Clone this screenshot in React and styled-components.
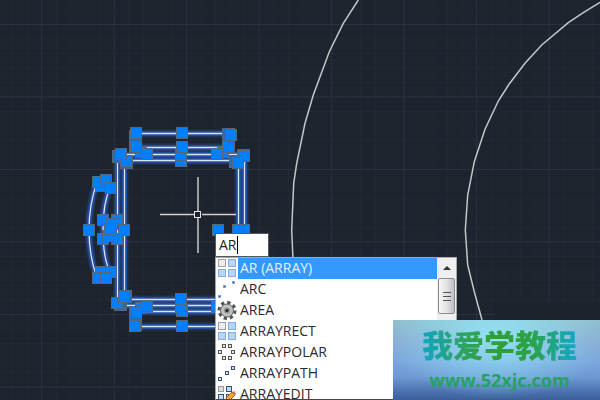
import React from "react";
import styled, { createGlobalStyle } from "styled-components";

const GlobalStyle = createGlobalStyle`
  * { box-sizing: border-box; }
  body { margin: 0; background: #1d242d; }
`;

const Workspace = styled.main`
  position: relative;
  min-height: 100vh;
  overflow: hidden;
  background: #1d242d;
  font-family: "Open Sans", "Noto Sans", sans-serif;
`;

const Drawing = styled.svg`
  position: absolute;
  inset: 0;
  width: 100%;
  height: 100%;
`;

const CommandPrompt = styled.form`
  position: absolute;
  left: 215px;
  top: 233px;
  bottom: 0;
  width: 242px;
  display: flex;
  flex-direction: column;
`;

const CommandField = styled.label`
  display: flex;
  align-items: center;
  flex: none;
  width: 54px;
  height: 24px;
  padding-left: 3px;
  background: #fff;
  border: 1px solid #55585c;
`;

const CommandInput = styled.input`
  width: 18px;
  padding: 0;
  border: 0;
  outline: 0;
  background: transparent;
  color: #222;
  font: 14px/20px "Open Sans", sans-serif;
`;

const Caret = styled.span`
  width: 1px;
  height: 18px;
  background: #000;
`;

const Suggestions = styled.div`
  display: flex;
  flex: 1;
  min-height: 0;
  border: 1px solid #a5a7aa;
  border-bottom-color: #45474b;
  background: #fff;
`;

const OptionList = styled.div`
  flex: 1;
  min-width: 0;
  overflow: hidden;
`;

const Option = styled.button`
  display: flex;
  width: 100%;
  height: 21px;
  padding: 0;
  border: 0;
  background: #fff;
  color: #2b2b2b;
  font: 14px/20px "Open Sans", sans-serif;
  text-align: left;
`;

const OptionIcon = styled.svg`
  flex: none;
  width: 22px;
  height: 21px;
`;

const OptionText = styled.span`
  flex: 1;
  height: 21px;
  padding-left: 2px;
  background: ${(p) => (p.$selected ? "#3399ff" : "transparent")};
  color: ${(p) => (p.$selected ? "#e4f1ff" : "inherit")};
`;

const ScrollBar = styled.div`
  display: flex;
  flex-direction: column;
  align-items: center;
  width: 19px;
  background: #f0eff0;
`;

const ScrollUp = styled.button`
  display: grid;
  place-items: center;
  width: 100%;
  height: 20px;
  padding: 0;
  border: 0;
  background: transparent;
`;

const ScrollThumb = styled.div`
  display: grid;
  place-items: center;
  width: 17px;
  height: 36px;
  border: 1px solid #8e8e90;
  border-radius: 2px;
  background: linear-gradient(90deg, #f6f6f6, #e2e2e3 50%, #bfbfc2);
`;

const Watermark = styled.aside`
  position: absolute;
  right: 0;
  bottom: 0;
  width: 207px;
  height: 80px;
  display: flex;
  flex-direction: column;
  align-items: center;
  padding: 4px 0 0 6px;
  background:
    radial-gradient(ellipse 110px 62px at 50% 22%, rgba(148, 234, 250, 0.85), rgba(140, 215, 245, 0) 100%),
    linear-gradient(180deg, #8fc0ce 0%, #8bacd2 25%, #7ba6dc 52%, #6c98d2 72%, #4a70ad 90%, #3c5f98 100%);
`;

const SiteName = styled.strong`
  font: 900 31px/40px "Noto Sans CJK SC", sans-serif;
  background: linear-gradient(90deg, #12a5c2, #2da35b 28%, #2f9f37 52%, #2ba34c 72%, #10a9cb);
  background-clip: text;
  color: transparent;
`;

const SiteLink = styled.a`
  color: #25a163;
  font: 700 18px/32px "Open Sans", sans-serif;
  text-decoration: none;
`;

const steps = (first, step, count) => Array.from({ length: count }, (_, i) => first + i * step);
const minorX = steps(-1.8, 14.5, 134);
const minorY = steps(10, 14.5, 75);
const majorX = steps(41.7, 72.5, 27);
const majorY = steps(24.5, 72.5, 15);

const selectedPaths = [
  "M136 133.5H231",
  "M136 147.5H228",
  "M121 154.5H244",
  "M125 160.5H238",
  "M124 299.5H240",
  "M118 305.5H240",
  "M136 311.5H240",
  "M136 326.5H240",
  "M117.5 154V303",
  "M124.5 160V298",
  "M238.5 160V240",
  "M244.5 156V240",
  "M97 182Q89 205 89 230Q89 256 97 278",
  "M110 188Q103 203 103 230Q103 258 110 272",
];

const backGrips = [
  { x: 129.5, y: 130.5, w: 12, h: 22 },
  { x: 112.5, y: 150.5, w: 12, h: 12 },
  { x: 120.5, y: 156.5, w: 12, h: 12 },
  { x: 222.5, y: 128.5, w: 12, h: 25 },
  { x: 237.5, y: 149.5, w: 12, h: 12 },
  { x: 229.5, y: 155.5, w: 12, h: 12 },
  { x: 114.5, y: 298.5, w: 12, h: 12 },
  { x: 118.5, y: 290.5, w: 13, h: 12 },
  { x: 129.5, y: 306.5, w: 12, h: 24 },
];

const grips = [
  [141, 152], [136, 133], [136, 147], [147, 154], [126, 161], [121, 154],
  [181, 161], [181, 155], [182, 147], [182, 133],
  [223, 152], [231, 135], [228, 147], [217, 154], [244, 156], [238, 163],
  [101, 186], [98, 182], [106, 180], [111, 188],
  [103, 220], [117, 220], [112, 224], [103, 239], [117, 239], [108, 236], [110, 229], [124, 230], [89, 230],
  [101, 272], [111, 272], [98, 278], [106, 278],
  [117, 303], [124, 297], [141, 308], [147, 306], [136, 312], [135, 326],
  [182, 311], [181, 306], [181, 299], [182, 326], [217, 306],
  [218, 230], [244, 230], [238, 230],
];

function Grip({ x, y, w = 11, h = 11, fill }) {
  return <rect x={x} y={y} width={w} height={h} fill={fill} stroke="#53687e" />;
}

function DrawingArea() {
  return (
    <Drawing viewBox="0 0 600 400" preserveAspectRatio="xMinYMin slice" aria-hidden="true">
      <g stroke="#222934">
        {minorX.map((x) => <path key={x} d={`M${x} 0V1000`} />)}
        {minorY.map((y) => <path key={y} d={`M0 ${y}H1900`} />)}
      </g>
      <g stroke="#2b3143">
        {majorX.map((x) => <path key={x} d={`M${x} 0V1000`} />)}
        {majorY.map((y) => <path key={y} d={`M0 ${y}H1900`} />)}
      </g>
      <rect x="494" y="303" width="106" height="17" fill="#1c232c" />
      <g fill="none" stroke="#c4c6c8" strokeWidth="1.5">
        <path d="M358.3 0L343.3 23.3L329.3 51.7L313.3 95L305 123.3L296.7 163.3L293.7 183.3L291.7 230L293 260" />
        <path d="M600 2.3L583.3 12.7L568.3 22.7L541.7 45L525 63.3L509 84.3L498.3 101L485 129.3L474.3 161.7L467.7 195L465.3 230L467.7 265L474.3 291.7L482 320" />
      </g>
      <g fill="none">
        {selectedPaths.map((d) => <path key={d} d={d} stroke="#2456b4" strokeOpacity="0.35" strokeWidth="8" />)}
        {selectedPaths.map((d) => <path key={d} d={d} stroke="#2858b8" strokeOpacity="0.65" strokeWidth="5" />)}
        {selectedPaths.map((d) => <path key={d} d={d} stroke="#dce5f5" strokeWidth="1.3" />)}
      </g>
      {backGrips.map((g) => <Grip key={`${g.x}-${g.y}`} {...g} fill="#286bb5" />)}
      {grips.map(([x, y]) => <Grip key={`${x}-${y}`} x={x - 5.5} y={y - 5.5} fill="#0080ff" />)}
      <path d="M160 214.5H194M202 214.5H236" stroke="#d0d0d0" strokeWidth="1.3" />
      <path d="M198 177V211M198 218V253" stroke="#9c9fa2" strokeWidth="2" />
      <rect x="194.5" y="211.5" width="6" height="6" fill="#1d242d" stroke="#e4e4e4" />
    </Drawing>
  );
}

function Tiles({ cells, size, fill, stroke }) {
  return cells.map(([x, y]) => (
    <rect key={`${x}-${y}`} x={x} y={y} width={size} height={size} fill={fill} stroke={stroke} />
  ));
}

const blueTiles = { size: 7, fill: "#b9d4fb", stroke: "#83aceb" };

const icons = {
  grid: (
    <>
      <Tiles cells={[[2.5, 1.5]]} size={7} fill="#ececec" stroke="#a2a2a2" />
      <Tiles cells={[[12.5, 1.5], [2.5, 11.5], [12.5, 11.5]]} {...blueTiles} />
    </>
  ),
  arc: <Tiles cells={[[2.5, 16.5], [7.5, 6.5], [16.5, 2.5]]} size={2} fill="#2d54a8" stroke="#7fa3e2" />,
  gear: (
    <>
      <circle cx="11" cy="10.5" r="8" fill="none" stroke="#505254" strokeWidth="3" strokeDasharray="3.3 2.98" />
      <circle cx="11" cy="10.5" r="6.5" fill="#bfc1c3" stroke="#5b5d5f" />
      <circle cx="11" cy="10.5" r="3" fill="#8d8f91" />
      <circle cx="11" cy="10.5" r="1.5" fill="#222" />
    </>
  ),
  polar: (
    <Tiles
      cells={[[6.5, 2.5], [12.5, 2.5], [2.5, 8.5], [15.5, 8.5], [6.5, 14.5], [12.5, 14.5]]}
      size={3}
      fill="#e7e7e7"
      stroke="#555"
    />
  ),
  path: <Tiles cells={[[2.5, 14.5], [9.5, 8.5], [15.5, 3.5]]} size={3} fill="#dce7f9" stroke="#34517f" />,
  edit: (
    <>
      <Tiles cells={[[2.5, 2.5]]} size={5} fill="#ddd" stroke="#999" />
      <Tiles cells={[[10.5, 2.5], [2.5, 10.5], [10.5, 10.5]]} size={5} fill="#c5d8f4" stroke="#31537f" />
      <path d="M10 14L16 8L19 11L13 17Z" fill="#f1a72b" stroke="#a7641a" />
      <path d="M16 8L18 7L20 10L19 11Z" fill="#c87862" />
      <path d="M10 14L13 17L9 18Z" fill="#333" />
    </>
  ),
};

const commands = [
  { name: "AR (ARRAY)", icon: "grid", selected: true },
  { name: "ARC", icon: "arc" },
  { name: "AREA", icon: "gear" },
  { name: "ARRAYRECT", icon: "grid" },
  { name: "ARRAYPOLAR", icon: "polar" },
  { name: "ARRAYPATH", icon: "path" },
  { name: "ARRAYEDIT", icon: "edit" },
];

export default function App() {
  return (
    <Workspace>
      <GlobalStyle />
      <DrawingArea />
      <CommandPrompt>
        <CommandField>
          <CommandInput aria-label="Command" defaultValue="AR" />
          <Caret />
        </CommandField>
        <Suggestions>
          <OptionList role="listbox" aria-label="Commands">
            {commands.map(({ name, icon, selected }) => (
              <Option key={name} type="button" role="option" aria-selected={!!selected}>
                <OptionIcon viewBox="0 0 22 21" aria-hidden="true">{icons[icon]}</OptionIcon>
                <OptionText $selected={selected}>{name}</OptionText>
              </Option>
            ))}
          </OptionList>
          <ScrollBar>
            <ScrollUp type="button" aria-label="Scroll up">
              <svg width="8" height="4" aria-hidden="true"><path d="M0 4L4 0L8 4Z" fill="#333" /></svg>
            </ScrollUp>
            <ScrollThumb>
              <svg width="8" height="10" aria-hidden="true">
                <path d="M0 1.5H8M0 5.5H8M0 9.5H8" stroke="#555" />
              </svg>
            </ScrollThumb>
          </ScrollBar>
        </Suggestions>
      </CommandPrompt>
      <Watermark>
        <SiteName lang="zh">我爱学教程</SiteName>
        <SiteLink href="#">www.52xjc.com</SiteLink>
      </Watermark>
    </Workspace>
  );
}
